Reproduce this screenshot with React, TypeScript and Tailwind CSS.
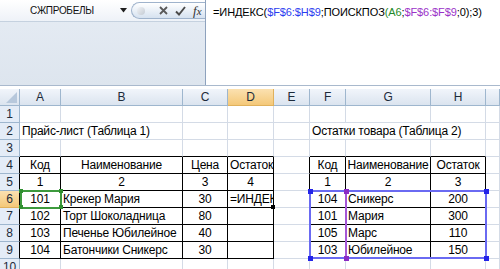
const COLS = ["", "A", "B", "C", "D", "E", "F", "G", "H", ""];

type Cell = { t: string; a?: "c" | "l" };
const data: Record<string, Cell> = {
  "4-1": { t: "Код", a: "c" },
  "4-2": { t: "Наименование", a: "c" },
  "4-3": { t: "Цена", a: "c" },
  "4-4": { t: "Остаток", a: "l" },
  "5-1": { t: "1", a: "c" },
  "5-2": { t: "2", a: "c" },
  "5-3": { t: "3", a: "c" },
  "5-4": { t: "4", a: "c" },
  "6-1": { t: "101", a: "c" },
  "6-2": { t: "Крекер Мария" },
  "6-3": { t: "30", a: "c" },
  "6-4": { t: "=ИНДЕКС(" },
  "7-1": { t: "102", a: "c" },
  "7-2": { t: "Торт Шоколадница" },
  "7-3": { t: "80", a: "c" },
  "8-1": { t: "103", a: "c" },
  "8-2": { t: "Печенье Юбилейное" },
  "8-3": { t: "40", a: "c" },
  "9-1": { t: "104", a: "c" },
  "9-2": { t: "Батончики Сникерс" },
  "9-3": { t: "30", a: "c" },
  "4-6": { t: "Код", a: "c" },
  "4-7": { t: "Наименование", a: "c" },
  "4-8": { t: "Остаток", a: "c" },
  "5-6": { t: "1", a: "c" },
  "5-7": { t: "2", a: "c" },
  "5-8": { t: "3", a: "c" },
  "6-6": { t: "104", a: "c" },
  "6-7": { t: "Сникерс" },
  "6-8": { t: "200", a: "c" },
  "7-6": { t: "101", a: "c" },
  "7-7": { t: "Мария" },
  "7-8": { t: "300", a: "c" },
  "8-6": { t: "105", a: "c" },
  "8-7": { t: "Марс" },
  "8-8": { t: "110", a: "c" },
  "9-6": { t: "103", a: "c" },
  "9-7": { t: "Юбилейное" },
  "9-8": { t: "150", a: "c" },
};

// tables: A4:D9 and F4:H9
const inTable = (r: number, c: number) =>
  r >= 4 && r <= 9 && ((c >= 1 && c <= 4) || (c >= 6 && c <= 8));

function Sheet() {
  const rows = [1, 2, 3, 4, 5, 6, 7, 8, 9, 10];
  return (
    <div className="relative grid grid-cols-[20px_41px_122px_45px_46px_36px_36px_85px_55px_14px] auto-rows-[17px] text-[12px] tracking-[-0.2px] text-black">
      {COLS.map((c, i) =>
        i === 0 ? (
          <div key={i} className="relative border-r border-b border-[#9eb6ce] bg-gradient-to-b from-[#f1f5fb] to-[#dbe4ef]">
            <svg className="absolute right-[2px] bottom-[2px]" width="11" height="11" viewBox="0 0 11 11">
              <polygon points="11,0 11,11 0,11" fill="#b7c8dc" />
            </svg>
          </div>
        ) : (
          <div
            key={i}
            className={
              i === 4
                ? "flex items-center justify-center border-r border-b border-[#e0b15c] bg-gradient-to-b from-[#fbe1b0] to-[#f4c878] text-[#1d2b3a]"
                : "flex items-center justify-center border-r border-b border-[#9eb6ce] bg-gradient-to-b from-[#f1f5fb] to-[#dbe4ef] text-[#1d2b3a]"
            }
          >
            {c}
          </div>
        )
      )}
      {rows.map((r) => (
        <Row key={r} r={r} />
      ))}

      {/* A6 reference highlight */}
      <div className="absolute left-[20px] top-[101px] w-[42px] h-[19px] border-2 border-[#3d9a3d]" />
      {[
        [19, 100],
        [59, 100],
        [19, 116],
        [59, 116],
      ].map(([x, y], i) => (
        <div key={i} className="absolute w-[4px] h-[4px] bg-[#2f8f2f]" style={{ left: x, top: y }} />
      ))}

      {/* D6 fill handle */}
      <div className="absolute left-[271px] top-[116px] w-[4px] h-[4px] bg-black" />

      {/* F6:H9 range */}
      <div className="absolute left-[309px] top-[101px] w-[178px] h-[69px] border-2 border-[#6a6af2]" />
      <div className="absolute left-[345px] top-[101px] w-[2px] h-[69px] bg-[#a657d6]" />
      {[
        [308, 100],
        [484, 100],
        [308, 167],
        [484, 167],
      ].map(([x, y], i) => (
        <div key={i} className="absolute w-[5px] h-[5px] bg-[#2424e8]" style={{ left: x, top: y }} />
      ))}
      {[
        [344, 100],
        [344, 167],
      ].map(([x, y], i) => (
        <div key={i} className="absolute w-[5px] h-[5px] bg-[#8a2bc4]" style={{ left: x, top: y }} />
      ))}
    </div>
  );
}

function Row({ r }: { r: number }) {
  const cells = [];
  cells.push(
    <div
      key="h"
      className={
        r === 6
          ? "flex items-center justify-center border-r border-b border-[#e0b15c] border-r-black bg-gradient-to-b from-[#fbe1b0] to-[#f4c878] text-[#1d2b3a]"
          : r >= 4 && r <= 9
            ? "flex items-center justify-center border-r border-b border-[#9eb6ce] border-r-black bg-[#e4ecf7] text-[#1d2b3a]"
            : "flex items-center justify-center border-r border-b border-[#9eb6ce] bg-[#e4ecf7] text-[#1d2b3a]"
      }
    >
      {r}
    </div>
  );
  for (let c = 1; c <= 9; c++) {
    if (r === 2 && c === 1) {
      cells.push(
        <div key={c} className="col-span-2 flex items-center pl-[2px] whitespace-nowrap border-r border-b border-[#d4dbe6]">
          Прайс-лист (Таблица 1)
        </div>
      );
      c = 2;
      continue;
    }
    if (r === 2 && c === 6) {
      cells.push(
        <div key={c} className="col-span-3 flex items-center pl-[2px] whitespace-nowrap border-r border-b border-[#d4dbe6]">
          Остатки товара (Таблица 2)
        </div>
      );
      c = 8;
      continue;
    }
    const rb = inTable(r, c) || inTable(r, c + 1);
    const bb = inTable(r, c) || inTable(r + 1, c);
    const d = data[`${r}-${c}`];
    let cls = "flex items-center overflow-hidden whitespace-nowrap border-r border-b ";
    cls += rb ? "border-r-black " : "border-r-[#d4dbe6] ";
    cls += bb ? "border-b-black " : "border-b-[#d4dbe6] ";
    cls += d?.a === "c" ? "justify-center" : "pl-[2px]";
    cells.push(
      <div key={c} className={cls}>
        {d?.t}
      </div>
    );
  }
  return <>{cells}</>;
}

function FormulaBar() {
  return (
    <div className="flex h-[86px] border-b border-[#a9b9cd]">
      <div className="w-[205px] flex flex-col bg-gradient-to-b from-[#e6ecf4] to-[#dde5ee]">
        <div className="h-[22px] flex items-stretch border-b border-[#c5d1df] bg-gradient-to-b from-white to-[#eef2f8]">
          <div className="w-[131px] flex items-center">
            <span className="ml-[30px] text-[10px] tracking-[-0.3px] text-[#111]">СЖПРОБЕЛЫ</span>
            <svg className="ml-auto mr-[4px]" width="7" height="5" viewBox="0 0 7 5">
              <polygon points="0,0 7,0 3.5,4.5" fill="#1f1f1f" />
            </svg>
          </div>
          <div className="flex-1 my-[2px] flex items-center rounded-l-full border border-r-0 border-[#9fb3cc] bg-gradient-to-b from-white to-[#d6e2f0]">
            <span className="ml-[5px] w-[8px] h-[8px] rounded-full bg-gradient-to-br from-[#f2f4f7] to-[#c3cad3]" />
            <svg className="ml-[14px]" width="9" height="9" viewBox="0 0 9 9">
              <path d="M1 1 L8 8 M8 1 L1 8" stroke="#5a5a5a" strokeWidth="1.8" />
            </svg>
            <svg className="ml-[7px]" width="11" height="10" viewBox="0 0 11 10">
              <path d="M1 5.5 L4 8.5 L10 1" stroke="#4a4a4a" strokeWidth="1.9" fill="none" />
            </svg>
            <span className="ml-[7px] text-[13px] italic text-[#333] font-['Liberation_Serif',serif] leading-none">
              f<span className="text-[11px]">x</span>
            </span>
          </div>
        </div>
      </div>
      <div className="flex-1 border-l border-[#8ea2bd] bg-white pl-[7px] pt-[4px] text-[11px] tracking-[-0.1px] whitespace-nowrap text-black">
        =ИНДЕКС(<span className="text-[#2b3cf0]">$F$6:$H$9</span>;ПОИСКПОЗ
        <span className="text-[#1f8a2a]">(A6</span>;<span className="text-[#9b33c8]">$F$6:$F$9</span>;0);3)
      </div>
    </div>
  );
}

export default function App() {
  return (
    <div className="w-[500px] h-[269px] overflow-hidden bg-white font-['Liberation_Sans',sans-serif]">
      <FormulaBar />
      <div className="h-[3px]" />
      <Sheet />
    </div>
  );
}
